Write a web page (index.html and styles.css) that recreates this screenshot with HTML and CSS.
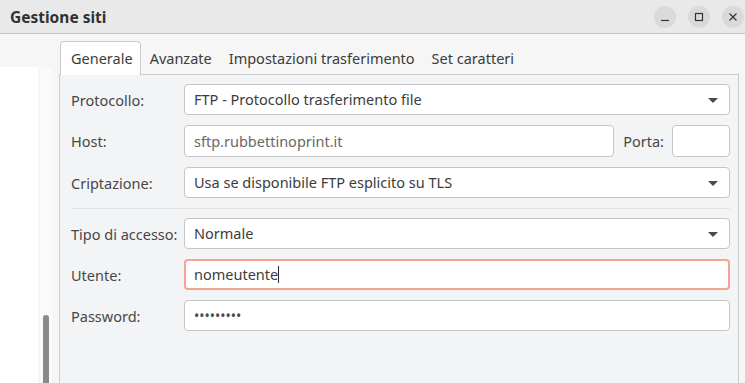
FILE: index.html
```html
<!DOCTYPE html>
<html lang="it">
<head>
    <meta charset="UTF-8">
    <meta name="viewport" content="width=device-width, initial-scale=1.0">
    <title>Gestione siti</title>
    <link rel="stylesheet" href="styles.css">
</head>
<body>
    <!-- Barra del titolo -->
    <div class="titlebar">
        <div class="title">Gestione siti</div>
        <div class="win-buttons">
            <div class="win-btn">
                <svg width="10" height="10" viewBox="0 0 10 10"><path d="M1 8.5h8" stroke="#333" stroke-width="1.2"/></svg>
            </div>
            <div class="win-btn">
                <svg width="10" height="10" viewBox="0 0 10 10"><rect x="1.5" y="1.5" width="7" height="7" fill="none" stroke="#333" stroke-width="1.2"/></svg>
            </div>
            <div class="win-btn">
                <svg width="10" height="10" viewBox="0 0 10 10"><path d="M1.5 1.5l7 7M8.5 1.5l-7 7" stroke="#333" stroke-width="1.2"/></svg>
            </div>
        </div>
    </div>

    <div class="main">
        <!-- Elenco siti (scorrimento) -->
        <div class="site-list"></div>
        <div class="scroll-track">
            <div class="scroll-thumb"></div>
        </div>

        <!-- Schede -->
        <div class="notebook">
            <div class="tabs">
                <div class="tab active">Generale</div>
                <div class="tab">Avanzate</div>
                <div class="tab">Impostazioni trasferimento</div>
                <div class="tab">Set caratteri</div>
            </div>
            <div class="page">
                <div class="form">
                    <div class="label">Protocollo:</div>
                    <div class="field select">FTP - Protocollo trasferimento file<span class="arrow"></span></div>

                    <div class="label">Host:</div>
                    <div class="host-row">
                        <div class="field host">sftp.rubbettinoprint.it</div>
                        <div class="label port-label">Porta:</div>
                        <div class="field port"></div>
                    </div>

                    <div class="label">Criptazione:</div>
                    <div class="field select">Usa se disponibile FTP esplicito su TLS<span class="arrow"></span></div>

                    <div class="separator"></div>

                    <div class="label">Tipo di accesso:</div>
                    <div class="field select">Normale<span class="arrow"></span></div>

                    <div class="label">Utente:</div>
                    <div class="field focused">nomeutente<span class="caret"></span></div>

                    <div class="label">Password:</div>
                    <div class="field password">•••••••••</div>
                </div>
            </div>
        </div>
        <div class="edge"></div>
    </div>
</body>
</html>
```

FILE: styles.css
```css
body {
    margin: 0;
    font-family: "Noto Sans", sans-serif;
    font-size: 14.5px;
    color: #3c3c3c;
    background-color: #f6f6f6;
    height: 383px;
    overflow: hidden;
    display: flex;
    flex-direction: column;
}

.titlebar {
    height: 33px;
    flex: none;
    display: flex;
    align-items: center;
    justify-content: space-between;
    padding: 0 1px 0 10px;
    background-color: #e9e9e9;
    border-bottom: 1px solid #c2c2c2;
}

.title {
    font-weight: bold;
    font-size: 15.5px;
    color: #323232;
}

.win-buttons {
    display: flex;
    gap: 12px;
}

.win-btn {
    width: 22px;
    height: 22px;
    border-radius: 50%;
    background-color: #dadada;
    display: flex;
    align-items: center;
    justify-content: center;
}

.main {
    flex: 1;
    display: flex;
    min-height: 0;
}

.site-list {
    width: 38px;
    margin-top: 33px;
    background-color: #ffffff;
}

.scroll-track {
    width: 12px;
    margin: 33px 0 0 2px;
    background-color: #fafafa;
    display: flex;
    flex-direction: column;
    justify-content: flex-end;
    align-items: center;
}

.scroll-thumb {
    width: 6px;
    height: 68px;
    background-color: #8a8a8a;
    border-radius: 3px 3px 0 0;
}

.notebook {
    width: 680px;
    margin-left: 7px;
    padding-top: 7px;
    display: flex;
    flex-direction: column;
}

.tabs {
    display: flex;
    align-items: flex-end;
    height: 33px;
    padding-left: 1px;
    border-bottom: 1px solid #cbcbcb;
}

.tab {
    height: 32px;
    line-height: 32px;
    padding: 0 8.5px;
    color: #3c3c3c;
}

.tab.active {
    padding: 0 7.5px 0 10px;
    background-color: #ffffff;
    border: 1px solid #cbcbcb;
    border-bottom: none;
    border-radius: 4px 4px 0 0;
    margin-bottom: -1px;
    height: 33px;
}

.page {
    flex: 1;
    border-left: 1px solid #cbcbcb;
    border-right: 1px solid #cbcbcb;
    background-color: #f3f4f6;
    padding: 9px 8px 0 11px;
}

.form {
    display: grid;
    grid-template-columns: 113px 546px;
    row-gap: 10px;
    align-items: center;
}

.label {
    color: #474747;
}

.field {
    position: relative;
    height: 31px;
    box-sizing: border-box;
    line-height: 29px;
    padding: 0 9px;
    background-color: #ffffff;
    border: 1px solid #c6c6c6;
    border-radius: 4px;
    color: #3c3c3c;
}

.arrow {
    position: absolute;
    right: 11px;
    top: 13px;
    border-left: 5px solid transparent;
    border-right: 5px solid transparent;
    border-top: 5px solid #4a4a4a;
}

.host-row {
    display: flex;
    align-items: center;
}

.host {
    flex: 1;
    height: 32px;
    line-height: 30px;
    color: #686868;
}

.port-label {
    margin: 0 8px 0 9px;
}

.port {
    width: 58px;
    height: 32px;
}

.separator {
    grid-column: 1 / 3;
    height: 1px;
    background-color: #e2e3e5;
    margin: -1px 0 -1px 0;
}

.focused {
    border: 2px solid #f5a491;
    line-height: 27px;
    padding: 0 8px;
}

.caret {
    display: inline-block;
    width: 1px;
    height: 17px;
    background-color: #2a2a2a;
    vertical-align: -3px;
}

.password {
    font-size: 14px;
    color: #4a4a4a;
}

.edge {
    flex: 1;
}
```
